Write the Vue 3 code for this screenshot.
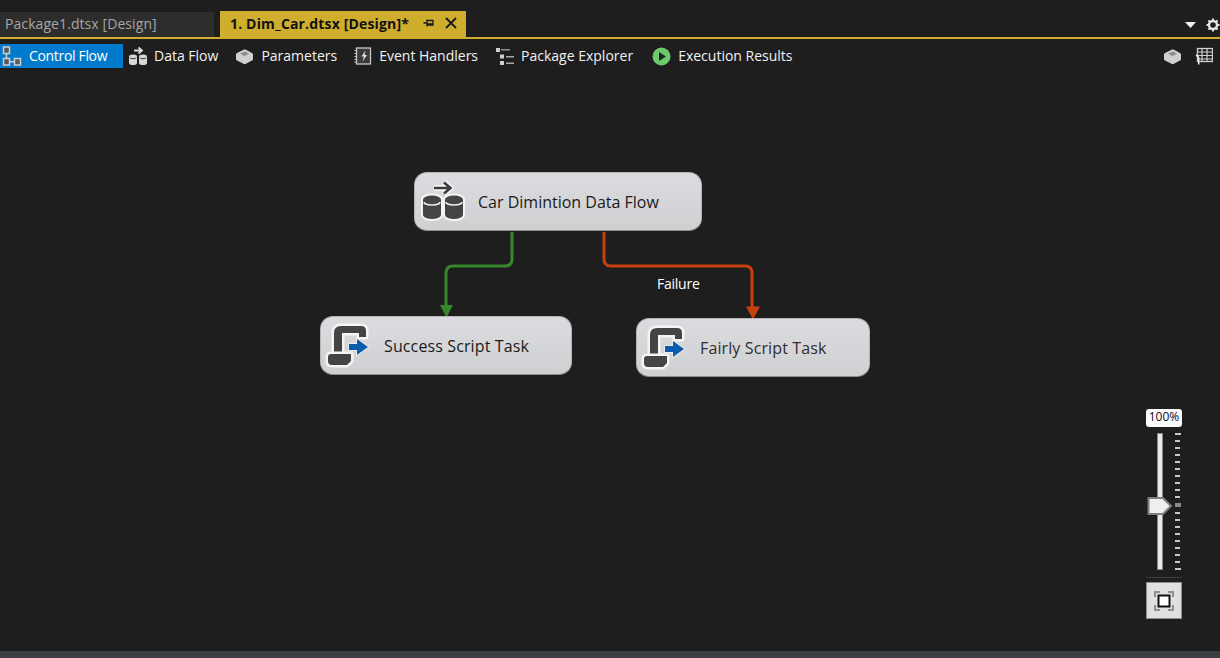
<script setup>
const ticks = Array.from({ length: 20 }, (_, i) => ({
  id: i,
  kind: i === 0 || i === 19 ? 'end' : i === 10 ? 'mid' : ''
}))
</script>

<template>
  <div class="app">
    <header class="tabstrip">
      <div class="tab tab-idle">Package1.dtsx [Design]</div>
      <div class="tab tab-active">
        <span class="tab-title">1. Dim_Car.dtsx [Design]*</span>
        <svg class="pin" width="12" height="12" viewBox="0 0 12 12">
          <path d="M0.500 6H4M4 2.500V9.500M4 3.500H10V8H4M4 6.800H10" fill="none" stroke="#1a1a1a" stroke-width="1.300" />
        </svg>
        <svg class="close" width="12" height="12" viewBox="0 0 12 12">
          <path d="M1 1L11 11M11 1L1 11" stroke="#1a1a1a" stroke-width="1.800" />
        </svg>
      </div>
      <div class="strip-tools">
        <svg width="11" height="6" viewBox="0 0 11 6"><path d="M0 0H11L5.500 6Z" fill="#f0f0f0" /></svg>
        <svg width="14" height="14" viewBox="0 0 14 14">
          <circle cx="7" cy="7" r="4" fill="none" stroke="#e6e6e6" stroke-width="2.400" />
          <path d="M7 0.500V3M7 11V13.500M0.500 7H3M11 7H13.500M2.400 2.400L4 4M10 10L11.600 11.600M11.600 2.400L10 4M4 10L2.400 11.600" stroke="#e6e6e6" stroke-width="2" />
        </svg>
      </div>
    </header>

    <nav class="toolbar">
      <div class="tool tool-active">
        <svg width="21" height="21" viewBox="0 0 21 21">
          <g fill="none" stroke="#cfcfcf" stroke-width="1.500">
            <rect x="1.500" y="1" width="6" height="6.500" fill="#5a5a5a" />
            <rect x="1.500" y="12.500" width="6" height="6.500" fill="#5a5a5a" />
            <rect x="12.500" y="12.500" width="6" height="6.500" fill="#5a5a5a" />
            <path d="M4.500 7.500V12.500M7.500 15.700H12.500" />
          </g>
        </svg>
        <span class="cf-label">Control Flow</span>
      </div>
      <div class="tool tool-data">
        <svg width="20" height="20" viewBox="0 0 20 20">
          <path d="M6 4.500H13M10.500 1.500L14 4.500L10.500 7.500" fill="none" stroke="#d8d8d8" stroke-width="1.800" />
          <path d="M1 10.500a4 2 0 0 1 8 0V17a4 2 0 0 1-8 0Z M11 10.500a4 2 0 0 1 8 0V17a4 2 0 0 1-8 0Z" fill="#d8d8d8" />
          <path d="M2 11.500a3 1.300 0 0 0 6 0M12 11.500a3 1.300 0 0 0 6 0" fill="none" stroke="#333" />
        </svg>
        <span>Data Flow</span>
      </div>
      <div class="tool tool-params">
        <svg width="19" height="17" viewBox="0 0 19 17">
          <path d="M1 6.500Q1 5.500 2 5L9 1.500H10.500L17 5Q18 5.500 18 6.500V11Q18 12 17 12.500L10.500 16H9L2 12.500Q1 12 1 11Z" fill="#cfcfcf" />
          <path d="M5 5.800L9.500 3.500L14 5.800L9.500 8Z" fill="#8d8d8d" />
        </svg>
        <span>Parameters</span>
      </div>
      <div class="tool tool-events">
        <svg width="18" height="18" viewBox="0 0 18 18">
          <rect x="2.500" y="1" width="14" height="16" fill="#3a3a3a" stroke="#c8c8c8" stroke-width="1.300" />
          <path d="M0.500 3.500H3M0.500 6.500H3M0.500 9.500H3M0.500 12.500H3M0.500 15H3" stroke="#c8c8c8" />
          <path d="M11.500 3.500L7.500 9.500H10L8.500 14.500L13 8H10.500Z" fill="#e8e8e8" />
        </svg>
        <span>Event Handlers</span>
      </div>
      <div class="tool tool-explorer">
        <svg width="20" height="20" viewBox="0 0 20 20" fill="#cfcfcf">
          <rect x="1" y="2" width="4" height="4" />
          <rect x="6" y="3" width="9" height="1.500" fill="#8f8f8f" />
          <rect x="5" y="8.500" width="4" height="4" />
          <rect x="11" y="10" width="8" height="1.500" fill="#a8a8a8" />
          <rect x="5" y="15" width="4" height="4" />
          <rect x="11" y="16.500" width="8" height="1.500" fill="#a8a8a8" />
        </svg>
        <span>Package Explorer</span>
      </div>
      <div class="tool tool-exec">
        <svg width="19" height="19" viewBox="0 0 19 19">
          <circle cx="9.500" cy="9.500" r="9" fill="#6cc96c" />
          <path d="M7 5L14 9.500L7 14Z" fill="#1c2a1c" />
        </svg>
        <span>Execution Results</span>
      </div>
      <div class="tool-right">
        <svg width="19" height="17" viewBox="0 0 19 17">
          <path d="M1 6.500Q1 5.500 2 5L9 1.500H10.500L17 5Q18 5.500 18 6.500V11Q18 12 17 12.500L10.500 16H9L2 12.500Q1 12 1 11Z" fill="#cfcfcf" />
          <path d="M5 5.800L9.500 3.500L14 5.800L9.500 8Z" fill="#8d8d8d" />
        </svg>
        <svg width="18" height="18" viewBox="0 0 18 18">
          <rect x="2.500" y="1.500" width="15" height="13" fill="none" stroke="#d0d0d0" stroke-width="1.300" />
          <path d="M2.500 5H17.500M2.500 8.500H17.500M2.500 12H17.500M7 1.500V14.500M12 1.500V14.500" stroke="#d0d0d0" stroke-width="1.200" />
          <path d="M2 7L4.500 10.500V17.500H3V11L0.500 8.500Z" fill="#e6e6e6" />
        </svg>
      </div>
    </nav>

    <main class="canvas">
      <svg class="wires" width="1220" height="579" viewBox="0 72 1220 579">
        <path d="M512 232V259Q512 266 505 266H453Q446 266 446 273V306" fill="none" stroke="#37882c" stroke-width="3" />
        <path d="M440 305H453L446.500 317.500Z" fill="#37882c" />
        <path d="M604 232V259Q604 266 611 266H745Q752 266 752 273V307" fill="none" stroke="#c5400b" stroke-width="3" />
        <path d="M746 306.500H760L753 319.500Z" fill="#c5400b" />
      </svg>

      <div class="node node-data">
        <svg class="node-icon" width="50" height="50" viewBox="0 0 50 50">
          <path d="M17 11H33M27 5.500L33.500 11L27 16.500" fill="none" stroke="#f4f4f4" stroke-width="6" stroke-linejoin="round" />
          <path d="M17 11H33M27 5.500L33.500 11L27 16.500" fill="none" stroke="#3c3c3c" stroke-width="2.600" />
          <g fill="#444" stroke="#f4f4f4" stroke-width="4" paint-order="stroke" stroke-linejoin="round">
            <path d="M6 22.500a9 4 0 0 1 18 0V38a9 4 0 0 1-18 0Z" />
            <path d="M28 22.500a9 4 0 0 1 18 0V38a9 4 0 0 1-18 0Z" />
          </g>
          <path d="M7 25a8 3 0 0 0 16 0M29 25a8 3 0 0 0 16 0" fill="none" stroke="#f0f0f0" stroke-width="1.500" />
        </svg>
        <span class="node-label">Car Dimintion Data Flow</span>
      </div>

      <div class="node node-success">
        <svg class="node-icon" width="50" height="50" viewBox="0 0 50 50">
          <g fill="#444" stroke="#f4f4f4" stroke-width="5" paint-order="stroke" stroke-linejoin="round">
            <path d="M18 5H38Q43 5 43 10V16H36V12H19V34H11V12Q11 5 18 5Z" />
            <path d="M5 36Q5 33 8 33H28V40L24 44H9Q5 44 5 40Z" />
          </g>
          <path d="M26 23H34V18L45 26L34 34V29H26Z" fill="#0b5cad" stroke="#f4f4f4" stroke-width="1.500" paint-order="stroke" />
        </svg>
        <span class="node-label node-label-wide">Success Script Task</span>
      </div>

      <div class="node node-fail">
        <svg class="node-icon" width="50" height="50" viewBox="0 0 50 50">
          <g fill="#444" stroke="#f4f4f4" stroke-width="5" paint-order="stroke" stroke-linejoin="round">
            <path d="M18 5H38Q43 5 43 10V16H36V12H19V34H11V12Q11 5 18 5Z" />
            <path d="M5 36Q5 33 8 33H28V40L24 44H9Q5 44 5 40Z" />
          </g>
          <path d="M26 23H34V18L45 26L34 34V29H26Z" fill="#0b5cad" stroke="#f4f4f4" stroke-width="1.500" paint-order="stroke" />
        </svg>
        <span class="node-label node-label-wide node-label-soft">Fairly Script Task</span>
      </div>

      <span class="wire-label">Failure</span>

      <aside class="zoom">
        <div class="zoom-value">100%</div>
        <div class="zoom-slider">
          <div class="track"></div>
          <svg class="thumb" width="26" height="20" viewBox="0 0 26 20">
            <path d="M1.500 2H16L24 10L16 18H1.500Z" fill="#eeeeee" stroke="#7d7d7d" stroke-width="2" />
          </svg>
          <div class="ticks">
            <i v-for="t in ticks" :key="t.id" :class="['tick', t.kind]"></i>
          </div>
        </div>
        <div class="zoom-rule"></div>
        <div class="fit">
          <svg width="22" height="22" viewBox="0 0 22 22">
            <path d="M1 7V1H7V3H3V7ZM15 1H21V7H19V3H15ZM1 15H3V19H7V21H1ZM19 15H21V21H15V19H19Z" fill="#8f8f8f" />
            <rect x="5.500" y="5.500" width="11" height="11" fill="#fff" stroke="#111" stroke-width="2" />
          </svg>
        </div>
      </aside>
    </main>

    <footer class="statusbar"></footer>
  </div>
</template>

<style>
html, body { margin: 0; background: #1e1e1e; }
</style>

<style scoped>
.app {
  width: 1220px;
  height: 658px;
  display: flex;
  flex-direction: column;
  background: #1e1e1e;
  font-family: "Open Sans", "Noto Sans", sans-serif;
  overflow: hidden;
}

.tabstrip {
  height: 37px;
  flex: none;
  display: flex;
  align-items: flex-end;
  border-bottom: 2px solid #cfae2e;
  box-sizing: content-box;
}
.tab {
  display: flex;
  align-items: center;
  box-sizing: border-box;
  font-size: 14px;
  padding-bottom: 2px;
}
.tab-idle {
  width: 214px;
  height: 25px;
  padding-left: 5px;
  background: #2d2d2d;
  color: #a6a6a6;
  letter-spacing: 0.08px;
}
.tab-active {
  width: 246px;
  height: 26px;
  margin-left: 6px;
  padding-left: 10px;
  background: #cfae2e;
  color: #111;
}
.tab-title { font-weight: 700; flex: 1; letter-spacing: 0.16px; }
.pin { margin-right: 10px; }
.close { margin-right: 9px; }
.strip-tools {
  margin-left: auto;
  height: 25px;
  display: flex;
  align-items: center;
  gap: 10px;
}

.toolbar {
  height: 33px;
  flex: none;
  display: flex;
  align-items: flex-start;
  padding-top: 5px;
  box-sizing: border-box;
  color: #f1f1f1;
  font-size: 14px;
}
.tool {
  display: flex;
  align-items: center;
  height: 24px;
  gap: 6px;
}
.tool span { padding-bottom: 2px; }
.tool-active {
  width: 123px;
  box-sizing: border-box;
  padding-left: 2px;
  background: #007acc;
  color: #fff;
}
.cf-label { letter-spacing: -0.33px; }
.tool-data { margin-left: 5px; }
.tool-params { margin-left: 17px; gap: 7px; }
.tool-events { margin-left: 17px; gap: 7px; }
.tool-explorer { margin-left: 17px; gap: 6px; }
.tool-exec { margin-left: 19px; gap: 7px; }
.tool-right {
  margin-left: auto;
  display: flex;
  align-items: center;
  height: 24px;
  gap: 13px;
  padding-right: 7px;
}

.canvas {
  flex: 1;
  position: relative;
}
.wires {
  position: absolute;
  left: 0;
  top: 0;
}

.node {
  position: absolute;
  box-sizing: border-box;
  height: 59px;
  display: flex;
  align-items: center;
  background: linear-gradient(#dcdce0, #cfd0d2);
  border: 1px solid #b4b4b6;
  border-bottom-color: #8d8d8f;
  border-radius: 13px;
  color: #1a1a1a;
  font-size: 16px;
}
.node-data { left: 414px; top: 100px; width: 288px; }
.node-success { left: 320px; top: 244px; width: 252px; }
.node-fail { left: 636px; top: 246px; width: 234px; }
.node-icon { flex: none; margin-left: 2px; }
.node-label { margin-left: 11px; white-space: nowrap; }
.node-label-wide { letter-spacing: 0.12px; }
.node-label-soft { color: #2e2e2e; }

.wire-label {
  position: absolute;
  left: 657px;
  top: 202px;
  color: #fff;
  font-size: 14px;
  line-height: 20px;
  letter-spacing: -0.25px;
}

.zoom {
  position: absolute;
  left: 1146px;
  top: 337px;
  width: 36px;
}
.zoom-value {
  height: 18px;
  background: #fafafa;
  border-radius: 3px;
  color: #101028;
  font-size: 12px;
  line-height: 16px;
  text-align: center;
}
.zoom-slider {
  position: relative;
  height: 137px;
  margin-top: 6px;
}
.track {
  position: absolute;
  left: 11px;
  top: 0;
  width: 6px;
  height: 100%;
  box-sizing: border-box;
  background: #e8e8ee;
  border: 1px solid #8a8a8a;
}
.thumb {
  position: absolute;
  left: 1px;
  top: 63px;
}
.ticks {
  position: absolute;
  left: 29px;
  top: 0;
  width: 7px;
  height: 100%;
  display: flex;
  flex-direction: column;
  justify-content: space-between;
  align-items: flex-start;
}
.tick {
  display: block;
  width: 5px;
  height: 2px;
  background: #c8c8c8;
}
.tick.end { width: 6px; }
.tick.mid { width: 6px; height: 4px; background: #8a8a8a; }
.zoom-rule {
  height: 1px;
  margin-top: 7px;
  background: #3c3c3c;
}
.fit {
  height: 37px;
  margin-top: 4px;
  box-sizing: border-box;
  display: flex;
  align-items: center;
  justify-content: center;
  background: #e0e0e0;
  border: 1px solid #8d8d8d;
}

.statusbar {
  height: 7px;
  flex: none;
  background: #3b3f42;
}
</style>
